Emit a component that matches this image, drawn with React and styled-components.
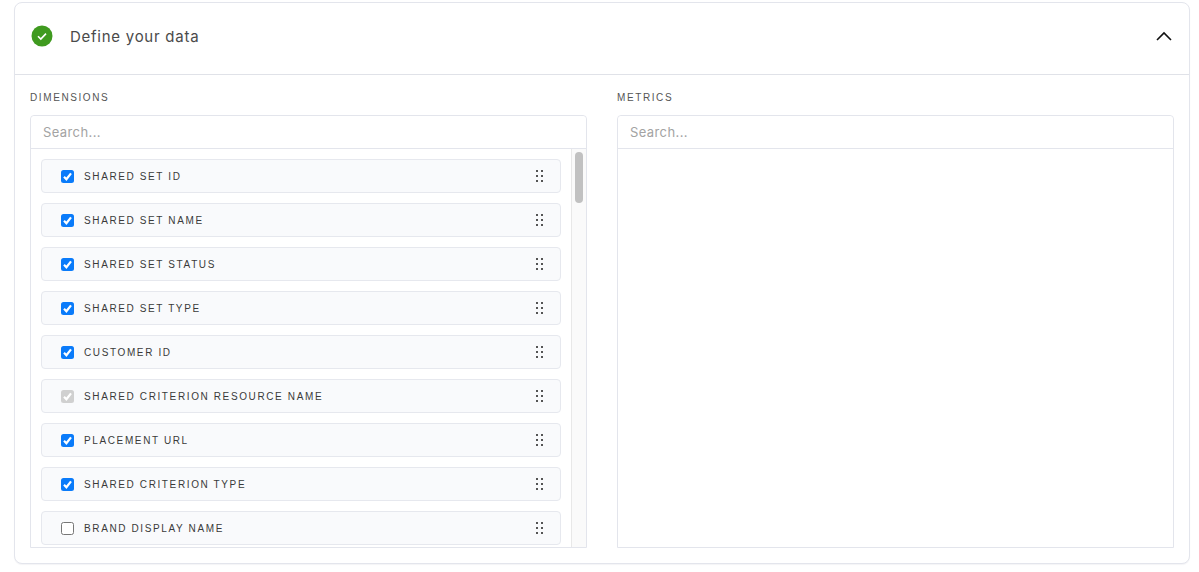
import React from 'react';
import styled, { createGlobalStyle } from 'styled-components';

const GlobalStyle = createGlobalStyle`
  html, body {
    margin: 0;
    background: #fff;
  }
  * {
    box-sizing: border-box;
  }
`;

const dimensions = [
  { name: 'SHARED SET ID', state: 'on' },
  { name: 'SHARED SET NAME', state: 'on' },
  { name: 'SHARED SET STATUS', state: 'on' },
  { name: 'SHARED SET TYPE', state: 'on' },
  { name: 'CUSTOMER ID', state: 'on' },
  { name: 'SHARED CRITERION RESOURCE NAME', state: 'locked' },
  { name: 'PLACEMENT URL', state: 'on' },
  { name: 'SHARED CRITERION TYPE', state: 'on' },
  { name: 'BRAND DISPLAY NAME', state: 'off' },
];

const Check = ({ state }) => (
  <CheckBox $state={state}>
    {state !== 'off' && (
      <svg width="13" height="13" viewBox="0 0 13 13">
        <path d="M3 6.8l2.4 2.5L10 3.4" fill="none" stroke="#fff" strokeWidth="2.2" />
      </svg>
    )}
  </CheckBox>
);

const Grip = () => (
  <GripIcon width="7" height="14" viewBox="0 0 7 14">
    {[1, 6, 11].map((y) => (
      <g key={y}>
        <rect x="0" y={y} width="2" height="2" />
        <rect x="5" y={y} width="2" height="2" />
      </g>
    ))}
  </GripIcon>
);

const App = () => {
  return (
    <Page>
      <GlobalStyle />
      <Card>
        <Header>
          <TitleGroup>
            <svg width="22" height="22" viewBox="0 0 22 22">
              <circle cx="11" cy="11" r="10.5" fill="#3f9a1f" />
              <path d="M7 11.3l2.8 2.8L15 8.6" fill="none" stroke="#fff" strokeWidth="1.6" />
            </svg>
            <Title>Define your data</Title>
          </TitleGroup>
          <svg width="16" height="10" viewBox="0 0 16 10">
            <path d="M1 9l7-7 7 7" fill="none" stroke="#111" strokeWidth="1.6" />
          </svg>
        </Header>
        <Columns>
          <Column>
            <Label>DIMENSIONS</Label>
            <Box>
              <Search placeholder="Search..." readOnly />
              <ListArea>
                <List>
                  {dimensions.map((d) => (
                    <Row key={d.name}>
                      <RowLabel>
                        <Check state={d.state} />
                        <RowText>{d.name}</RowText>
                      </RowLabel>
                      <Grip />
                    </Row>
                  ))}
                </List>
                <Track>
                  <Thumb />
                </Track>
              </ListArea>
            </Box>
          </Column>
          <Column>
            <Label>METRICS</Label>
            <Box>
              <Search placeholder="Search..." readOnly />
            </Box>
          </Column>
        </Columns>
      </Card>
    </Page>
  );
};

export default App;

const Page = styled.div`
  width: 1199px;
  height: 572px;
  padding: 2px 9px 8px 14px;
  font-family: 'Inter', 'Liberation Sans', sans-serif;
  overflow: hidden;
`;

const Card = styled.section`
  height: 562px;
  display: flex;
  flex-direction: column;
  background: #fff;
  border: 1px solid #e3e5ec;
  border-radius: 8px;
  box-shadow: 0 1px 1px rgba(30, 40, 70, 0.05);
`;

const Header = styled.header`
  height: 72px;
  flex: none;
  display: flex;
  align-items: center;
  justify-content: space-between;
  padding: 0 17px 6px 16px;
  border-bottom: 1px solid #e0e2e8;
`;

const TitleGroup = styled.div`
  display: flex;
  align-items: center;
  gap: 17px;
`;

const Title = styled.h2`
  margin: 2px 0 0;
  font-size: 15px;
  font-weight: 400;
  letter-spacing: 0.74px;
  color: #4a4a4a;
`;

const Columns = styled.div`
  flex: 1;
  min-height: 0;
  display: grid;
  grid-template-columns: 557px 557px;
  gap: 30px;
  padding: 0 15px 15px;
`;

const Column = styled.div`
  display: flex;
  flex-direction: column;
  min-height: 0;
`;

const Label = styled.div`
  height: 40px;
  padding-top: 16px;
  font-family: 'Liberation Sans', Arial, sans-serif;
  font-size: 10px;
  line-height: 14px;
  letter-spacing: 1.6px;
  color: #555;
`;

const Box = styled.div`
  flex: 1;
  min-height: 0;
  display: flex;
  flex-direction: column;
  border: 1px solid #e3e5ec;
  border-radius: 4px 4px 0 0;
`;

const Search = styled.input`
  height: 33px;
  flex: none;
  width: 100%;
  padding: 0 12px;
  border: 0;
  border-bottom: 1px solid #e3e5ec;
  border-radius: 4px 4px 0 0;
  outline: none;
  background: #fff;
  font-family: inherit;
  font-size: 13px;
  letter-spacing: 0.4px;
  &::placeholder {
    color: #a3a3a3;
    opacity: 1;
  }
`;

const ListArea = styled.div`
  flex: 1;
  min-height: 0;
  display: flex;
  overflow: hidden;
`;

const List = styled.div`
  flex: 1;
  min-width: 0;
  display: flex;
  flex-direction: column;
  gap: 10px;
  padding: 10px 10px 0;
`;

const Row = styled.div`
  height: 34px;
  flex: none;
  display: flex;
  align-items: center;
  justify-content: space-between;
  padding: 0 17px 0 19px;
  background: #f9fafc;
  border: 1px solid #e6e8ee;
  border-radius: 4px;
`;

const RowLabel = styled.div`
  display: flex;
  align-items: center;
  gap: 10px;
`;

const RowText = styled.span`
  font-family: 'Liberation Sans', Arial, sans-serif;
  font-size: 10px;
  letter-spacing: 1.62px;
  color: #3a3a3a;
`;

const CheckBox = styled.span`
  width: 13px;
  height: 13px;
  display: block;
  border-radius: 2.5px;
  background: ${({ $state }) =>
    $state === 'on' ? '#0a7bfa' : $state === 'locked' ? '#d0d0d0' : '#fff'};
  border: ${({ $state }) => ($state === 'off' ? '1px solid #777' : 'none')};
  svg {
    display: block;
  }
`;

const GripIcon = styled.svg`
  display: block;
  fill: #555;
`;

const Track = styled.div`
  width: 15px;
  flex: none;
  padding: 3px 3px 0 3px;
  background: #fafafa;
  border-left: 1px solid #e8e8e8;
`;

const Thumb = styled.div`
  height: 51px;
  border-radius: 4px;
  background: #c1c1c1;
`;
